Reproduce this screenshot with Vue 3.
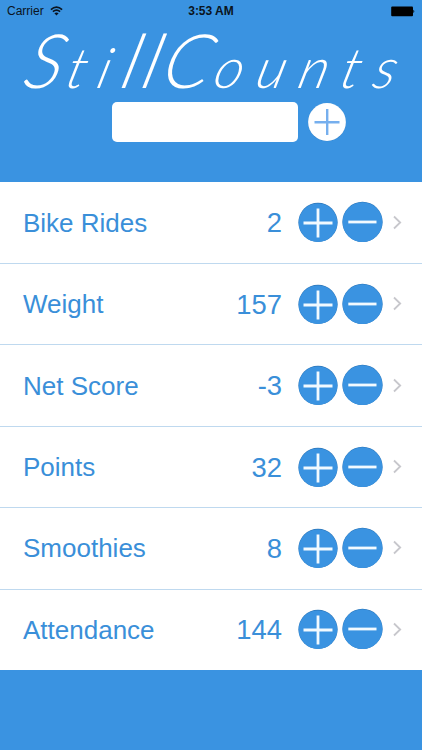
<template>
    <div class="screen">
        <header class="header">
            <div class="status-bar">
                <div class="carrier">
                    <span>Carrier</span>
                    <svg class="wifi" width="13" height="10" viewBox="0 0 13 10">
                        <path d="M0.9 3.6 Q6.5 -1.4 12.1 3.6" />
                        <path d="M2.9 5.7 Q6.5 2.5 10.1 5.7" />
                        <path class="dot" d="M6.5 9.6 L4.4 7.3 Q6.5 5.6 8.6 7.3 Z" />
                    </svg>
                </div>
                <span class="time">3:53 AM</span>
                <svg class="battery" width="24" height="11" viewBox="0 0 24 11">
                    <rect x="0.2" y="0.5" width="21.8" height="9.8" rx="1" />
                    <path d="M22.4 3.8 Q24.2 5.4 22.4 7 Z" />
                </svg>
            </div>
            <h1 class="title">S<span class="low">ti</span>llC<span class="low wide">ounts</span></h1>
            <form class="add-form" @submit.prevent="addCounter">
                <input type="text" class="add-input" v-model="newName" />
                <button type="submit" class="icon-button" aria-label="Add">
                    <svg width="40" height="40" viewBox="0 0 40 40">
                        <circle class="add-shadow" cx="20" cy="20.3" r="19" />
                        <circle class="add-circle" cx="20" cy="20" r="18.9" />
                        <path class="add-cross" d="M7.5 20.2 H32.5 M20.2 7 V33" />
                    </svg>
                </button>
            </form>
        </header>
        <ul class="counters">
            <li class="counter" v-for="counter in counters" :key="counter.name">
                <span class="name">{{ counter.name }}</span>
                <span class="count">{{ counter.count }}</span>
                <button class="icon-button plus" aria-label="Increase" @click="counter.count++">
                    <svg width="40" height="42" viewBox="0 0 40 42">
                        <circle class="rim" cx="20" cy="21.4" r="19.6" />
                        <circle class="disc" cx="20" cy="21.7" r="19.3" />
                        <path class="sign" d="M5.5 22 H34.5 M20 7.5 V36.5" />
                    </svg>
                </button>
                <button class="icon-button minus" aria-label="Decrease" @click="counter.count--">
                    <svg width="41" height="42" viewBox="0 0 41 42">
                        <circle class="rim" cx="20.5" cy="20.9" r="20.1" />
                        <circle class="disc" cx="20.5" cy="21.1" r="19.9" />
                        <path class="sign" d="M6.3 21 H34.5" />
                    </svg>
                </button>
                <svg class="chevron" width="9" height="15" viewBox="0 0 9 15">
                    <path d="M1 1.5 L7.2 7.5 L1 13.5" />
                </svg>
            </li>
        </ul>
    </div>
</template>

<script setup>
import { ref } from 'vue';

const newName = ref('');
const counters = ref([
    { name: 'Bike Rides', count: 2 },
    { name: 'Weight', count: 157 },
    { name: 'Net Score', count: -3 },
    { name: 'Points', count: 32 },
    { name: 'Smoothies', count: 8 },
    { name: 'Attendance', count: 144 }
]);

const addCounter = () => {
    const name = newName.value.trim();
    if (name === '') {
        return;
    }
    counters.value.push({ name, count: 0 });
    newName.value = '';
};
</script>

<style>
body {
    margin: 0;
    background: #3a93e1;
}
</style>

<style scoped>
.screen {
    min-height: 750px;
    background: #3a93e1;
    font-family: "Helvetica Neue", "Liberation Sans", Arial, sans-serif;
}
.header {
    display: flex;
    flex-direction: column;
    box-sizing: border-box;
    height: 181.7px;
}
.status-bar {
    display: grid;
    grid-template-columns: 1fr auto 1fr;
    align-items: center;
    height: 22px;
    padding: 0 7px;
    font-size: 12px;
    color: #0a1420;
}
.carrier {
    display: flex;
    align-items: center;
    gap: 6px;
}
.wifi path {
    fill: none;
    stroke: #0a1420;
    stroke-width: 1.7;
}
.wifi .dot {
    fill: #0a1420;
    stroke: none;
}
.time {
    font-weight: bold;
}
.battery {
    justify-self: end;
    fill: #000;
}
.title {
    height: 80px;
    margin: 0;
    padding-left: 28px;
    font-family: Lato, sans-serif;
    font-size: 75px;
    font-style: italic;
    font-weight: 300;
    line-height: 75px;
    letter-spacing: 5px;
    white-space: nowrap;
    color: #fff;
    transform: skewX(-15deg);
}
.low {
    font-size: 56px;
    line-height: 1;
    letter-spacing: 12px;
}
.wide {
    letter-spacing: 13.5px;
}
.add-form {
    display: flex;
    align-items: center;
    gap: 9.5px;
    height: 40px;
    padding-left: 112px;
}
.add-input {
    box-sizing: border-box;
    width: 185.5px;
    height: 40px;
    padding: 0 8px;
    border: none;
    border-radius: 5px;
    outline: none;
    background: #fff;
    font-size: 20px;
    color: #3a93e1;
}
.icon-button {
    display: block;
    padding: 0;
    border: none;
    background: none;
}
.icon-button svg {
    display: block;
}
.add-circle {
    fill: #fff;
}
.add-shadow {
    fill: #3581c6;
}
.add-cross {
    stroke: #76afee;
    stroke-width: 2.4;
}
.counters {
    margin: 0;
    padding: 0;
    list-style: none;
    background: #fff;
}
.counter {
    display: flex;
    align-items: center;
    box-sizing: border-box;
    height: 81.4px;
    padding: 0 20px 0 23px;
    font-size: 26px;
    color: #3a8fd9;
}
.counter + .counter {
    border-top: 1px solid #bfd9ef;
}
.counter:not(:first-child) {
    padding-bottom: 1px;
}
.name {
    flex: 1;
    padding-top: 2px;
}
.count {
    margin-right: 16px;
    padding-top: 2px;
    font-size: 27.4px;
}
.plus {
    margin-right: 4px;
}
.rim {
    fill: #2d76b8;
}
.disc {
    fill: #3a93e1;
}
.sign {
    stroke: #f2faff;
    stroke-width: 2.8;
}
.chevron {
    margin-left: 10px;
}
.chevron path {
    fill: none;
    stroke: #c7c7cc;
    stroke-width: 1.8;
}
</style>
